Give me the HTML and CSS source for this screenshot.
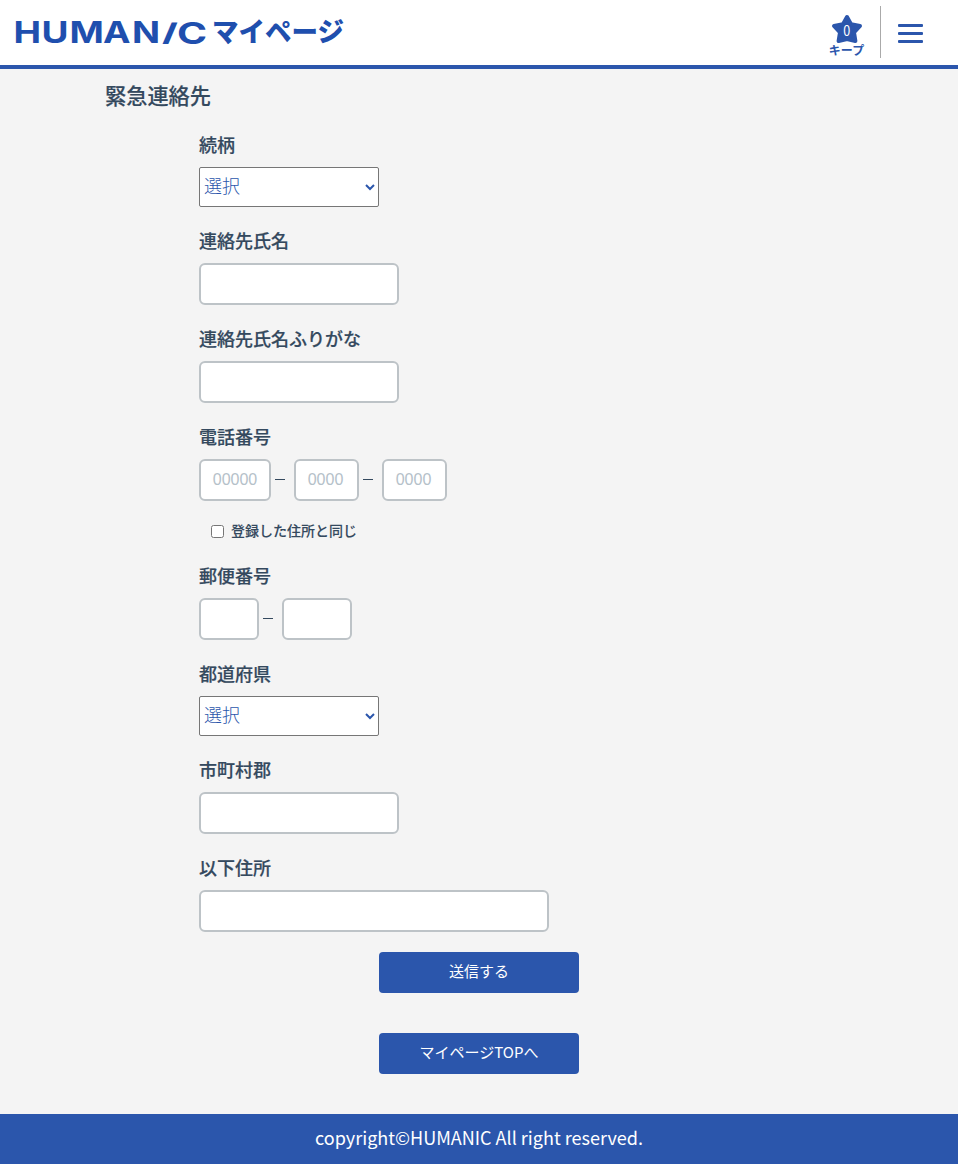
FILE: index.html
```html
<!DOCTYPE html>
<html lang="ja">
<head>
<meta charset="utf-8">
<title>緊急連絡先</title>
<link rel="stylesheet" href="styles.css">
</head>
<body>
<header class="header">
  <svg class="logo" width="340" height="36" viewBox="0 0 340 36">
    <text class="logo-en" y="29.5" transform="scale(1.25 1)" x="-1.2 21.2 43.6 70.4 93.6">HUMAN</text>
    <text class="logo-en" transform="translate(145 29.5) skewX(-23) scale(1.3 1)">I</text>
    <text class="logo-en" transform="translate(162 29.5) scale(1.38 1)">C</text>
    <text class="logo-ja" x="197" y="28" textLength="132" lengthAdjust="spacingAndGlyphs">マイページ</text>
  </svg>
  <div class="tools">
    <a class="keep">
      <svg class="star" width="32" height="30" viewBox="0 0 32 30"><path d="M16 3 20 10.3 29 12 23 18.4 24.4 27 16 25 7.6 27 9 18.4 3 12 12 10.3Z" fill="#2b56ac" stroke="#2b56ac" stroke-width="4" stroke-linejoin="round"/><text class="count" x="15.7" y="21.5" text-anchor="middle" textLength="7" lengthAdjust="spacingAndGlyphs">0</text></svg>
      <span class="keep-label">キープ</span>
    </a>
    <div class="menu"><i></i><i></i><i></i></div>
  </div>
</header>
<main class="main">
  <h1 class="title">緊急連絡先</h1>
  <form class="form">
    <div class="field"><label class="label">続柄</label><select class="select"><option>選択</option></select></div>
    <div class="field"><label class="label">連絡先氏名</label><input class="input"></div>
    <div class="field"><label class="label">連絡先氏名ふりがな</label><input class="input"></div>
    <div class="field phone"><label class="label">電話番号</label>
      <div class="row"><input class="input tel-area" placeholder="00000"><i class="dash"></i><input class="input tel" placeholder="0000"><i class="dash"></i><input class="input tel" placeholder="0000"></div>
    </div>
    <label class="check"><input type="checkbox"><span>登録した住所と同じ</span></label>
    <div class="field"><label class="label">郵便番号</label>
      <div class="row"><input class="input zip-a"><i class="dash"></i><input class="input zip-b"></div>
    </div>
    <div class="field"><label class="label">都道府県</label><select class="select"><option>選択</option></select></div>
    <div class="field"><label class="label">市町村郡</label><input class="input"></div>
    <div class="field"><label class="label">以下住所</label><input class="input wide"></div>
  </form>
  <div class="actions"><button class="button">送信する</button><button class="button">マイページTOPへ</button></div>
</main>
<footer class="footer"><svg width="330" height="30"><text class="copyright" x="1" y="20" textLength="328" lengthAdjust="spacingAndGlyphs">copyright©HUMANIC All right reserved.</text></svg></footer>
</body>
</html>
```
FILE: styles.css
```css
* { box-sizing: border-box; }
body { margin: 0; background: #f4f4f4; color: #34495e; font-family: "Noto Sans CJK JP", sans-serif; }
.header { height: 69px; background: #fff; border-bottom: 4px solid #2b56ac; display: flex; justify-content: space-between; padding-left: 15px; }
.logo { margin-top: 14px; overflow: visible; fill: #1f4fae; }
.logo-en { font: 700 29.5px Inter, sans-serif; }
.logo-ja { font: 900 27px "Noto Sans CJK JP", sans-serif; }
.tools { display: flex; padding: 6px 35px 0 0; }
.keep { width: 68px; height: 52px; border-right: 1px solid #aaa; display: flex; flex-direction: column; align-items: center; padding-top: 8px; margin-right: 17px; }
.star { flex: none; }
.count { font: 14px "Noto Sans CJK JP", sans-serif; fill: #fff; }
.keep-label { font-size: 12px; font-weight: 700; line-height: 12px; color: #2b56ac; }
.menu { width: 25px; padding-top: 18px; display: flex; flex-direction: column; gap: 5px; }
.menu i { height: 3px; background: #2b56ac; border-radius: 1px; }
.title { margin: 0 0 0 105px; padding-top: 12px; height: 62px; font-size: 21.2px; font-weight: 500; line-height: 28px; -webkit-text-stroke: 0.15px; }
.form { margin-left: 199px; display: flex; flex-direction: column; }
.field { margin-bottom: 20px; }
.field.phone { margin-bottom: 18px; }
.label { display: block; height: 36px; font-size: 18px; font-weight: 500; line-height: 27px; -webkit-text-stroke: 0.2px; }
.select, .input { display: block; font-family: "Noto Sans CJK JP", sans-serif; }
.select { width: 180px; height: 40px; border: 1px solid #767676; border-radius: 2px; background: #fff; color: #2b56ac; font-size: 18px; font-weight: 300; padding: 0 0 4px; }
.input { width: 200px; height: 42px; margin: 0; padding: 0; border: 2px solid #bdc3c7; border-radius: 6px; background: #fff; text-align: center; font: 400 16px "Liberation Sans", sans-serif; }
.input::placeholder { color: #b5c1c9; }
.input.wide { width: 350px; }
.row { display: flex; align-items: center; }
.dash { width: 10px; height: 1px; background: #34495e; margin: 0 9px 2px 4px; }
.input.tel-area { width: 72px; }
.input.tel { width: 65px; padding-right: 2px; }
.input.zip-a { width: 60px; }
.input.zip-b { width: 70px; }
.check { display: flex; align-items: center; height: 22px; margin: 0 0 21px 12px; gap: 7px; font-size: 14px; font-weight: 500; -webkit-text-stroke: 0.1px; }
.check input { width: 13px; height: 13px; margin: 2px 0 0; }
.actions { display: flex; flex-direction: column; align-items: center; gap: 40px; margin-bottom: 40px; }
.button { width: 200px; height: 41px; border: 0; border-radius: 4px; padding: 0 0 4px; background: #2b56ac; color: #fff; font: 400 15px "Noto Sans CJK JP", sans-serif; }
.footer { height: 50px; padding-top: 11px; display: flex; justify-content: center; background: #2b56ac; }
.copyright { font: 400 18px "Noto Sans CJK JP", sans-serif; fill: #fff; }
```
